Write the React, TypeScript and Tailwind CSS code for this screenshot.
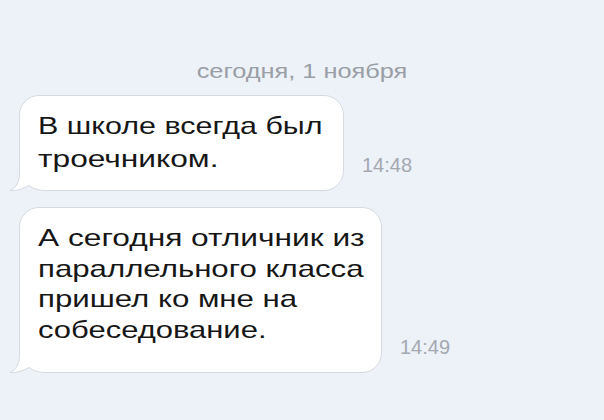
import React from 'react';

type Line = { text: string; scale: string };

type Message = {
  lines: Line[];
  time: string;
  box: string; // width, padding and leading per bubble
};

const messages: Message[] = [
  {
    lines: [
      { text: 'В школе всегда был', scale: 'scale-x-[1.27]' },
      { text: 'троечником.', scale: 'scale-x-[1.32]' },
    ],
    time: '14:48',
    box: 'w-[325px] pt-[13px] pb-[15px] leading-[33px]',
  },
  {
    lines: [
      { text: 'А сегодня отличник из', scale: 'scale-x-[1.32]' },
      { text: 'параллельного класса', scale: 'scale-x-[1.3]' },
      { text: 'пришел ко мне на', scale: 'scale-x-[1.3]' },
      { text: 'собеседование.', scale: 'scale-x-[1.29]' },
    ],
    time: '14:49',
    box: 'w-[363px] pt-[15px] pb-[27px] leading-[30.5px]',
  },
];

// bottom-left tail of an incoming bubble
function Tail() {
  return (
    <svg
      className="absolute left-[-11px] bottom-[-1px]"
      width="40"
      height="30"
      viewBox="0 0 40 30"
    >
      <rect x="0" y="0" width="37" height="30" fill="#edf1f8" />
      <path
        d="M10.5 0 L10.5 12 C10.5 21 7 27 1 29.5 C9 30 15 27 20 24.5 C24 27.5 29 29.5 37 29.5 L37 0 Z"
        fill="#ffffff"
      />
      <path
        d="M10.5 0 L10.5 12 C10.5 21 7 27 1 29.5 C9 30 15 27 20 24.5 C24 27.5 29 29.5 37 29.5"
        fill="none"
        stroke="#d5d9e0"
        strokeWidth="1"
      />
    </svg>
  );
}

function Bubble({ m }: { m: Message }) {
  return (
    <div className="flex items-end">
      <div
        className={`relative shrink-0 rounded-[20px] rounded-bl-none border border-[#d5d9e0] bg-white pl-[18px] text-[24px] text-[#161616] ${m.box}`}
      >
        <Tail />
        <span className="relative block whitespace-nowrap">
          {m.lines.map((l) => (
            <span key={l.text} className={`block origin-left ${l.scale}`}>
              {l.text}
            </span>
          ))}
        </span>
      </div>
      <span className="ml-[18px] mb-[16px] text-[20px] leading-[20px] text-[#a3a8b1]">{m.time}</span>
    </div>
  );
}

export default function App() {
  return (
    <div className="flex h-[420px] w-[604px] flex-col bg-[#edf1f8] font-['Liberation_Sans',sans-serif]">
      <div className="mt-[60px] flex h-[22px] justify-center">
        <span className="scale-x-[1.3] text-[19.5px] leading-[22px] text-[#9a9ea6]">сегодня, 1 ноября</span>
      </div>
      <div className="mt-[13px] flex flex-col gap-[16px] pl-[19px]">
        {messages.map((m) => (
          <Bubble key={m.time} m={m} />
        ))}
      </div>
    </div>
  );
}
